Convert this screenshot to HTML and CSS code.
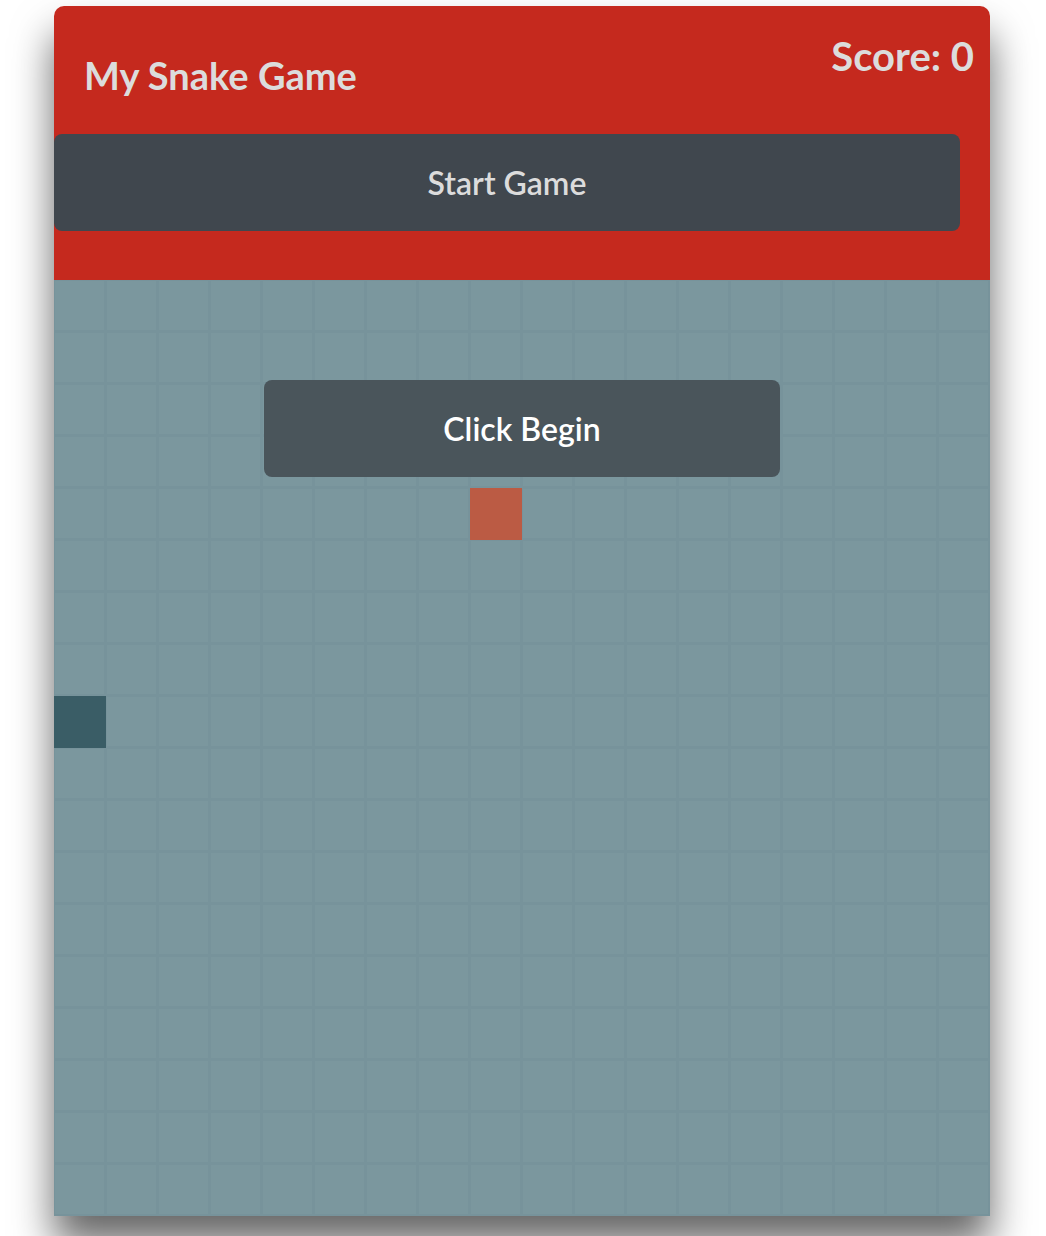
FILE: index.html
```html
<!DOCTYPE html>
<html lang="en">
<head>
<meta charset="utf-8">
<title>My Snake Game</title>
<link rel="stylesheet" href="styles.css">
</head>
<body>
<div class="card">
  <header class="header">
    <div class="top">
      <h1 class="title">My Snake Game</h1>
      <div class="score">Score: 0</div>
    </div>
    <button class="start">Start Game</button>
  </header>
  <main class="board">
    <div class="cell snake" style="grid-column: 1; grid-row: 9;"></div>
    <div class="cell food" style="grid-column: 9; grid-row: 5;"></div>
    <div class="overlay">Click Begin</div>
  </main>
</div>
</body>
</html>
```
FILE: styles.css
```css
html, body {
  margin: 0;
  padding: 0;
  background: #ffffff;
}
body {
  font-family: "Lato", "Open Sans", sans-serif;
  padding-bottom: 60px;
}
.card {
  width: 936px;
  margin: 6px auto 0;
  position: relative;
  left: -1px;
  border-radius: 10px 10px 0 0;
  box-shadow: 0 28px 40px rgba(0, 0, 0, 0.6);
}
.header {
  background: #c5291e;
  border-radius: 10px 10px 0 0;
  padding-bottom: 49px;
}
.top {
  display: flex;
  justify-content: space-between;
  align-items: flex-start;
  height: 128px;
}
.title {
  margin: 0;
  padding: 50px 0 0 30px;
  font-size: 38px;
  line-height: 1;
  font-weight: 700;
  color: #dcdcdc;
}
.score {
  padding: 30px 16px 0 0;
  font-size: 40px;
  line-height: 1;
  font-weight: 700;
  color: #dcdcdc;
}
.start {
  display: block;
  width: calc(100% - 30px);
  height: 97px;
  margin: 0;
  border: none;
  border-radius: 8px;
  background: #40474e;
  color: #dcdcdc;
  font-family: inherit;
  font-size: 32px;
  font-weight: 600;
  padding: 0;
}
.board {
  position: relative;
  display: grid;
  grid-template-columns: repeat(18, 52px);
  grid-template-rows: repeat(18, 52px);
  background-color: #7b979e;
  background-image:
    linear-gradient(to right, #77939b 0 1.5px, transparent 1.5px 50.5px, #77939b 50.5px 52px),
    linear-gradient(to bottom, #77939b 0 1.5px, transparent 1.5px 50.5px, #77939b 50.5px 52px);
  background-size: 52px 52px;
}
.cell {
  width: 52px;
  height: 52px;
}
.snake {
  background: #3a5d66;
}
.food {
  background: #bb5b44;
}
.overlay {
  position: absolute;
  top: 100px;
  left: 210px;
  width: 516px;
  height: 97px;
  border-radius: 8px;
  background: #4a555b;
  color: #ffffff;
  font-size: 32px;
  font-weight: 600;
  display: flex;
  align-items: center;
  justify-content: center;
}
```
